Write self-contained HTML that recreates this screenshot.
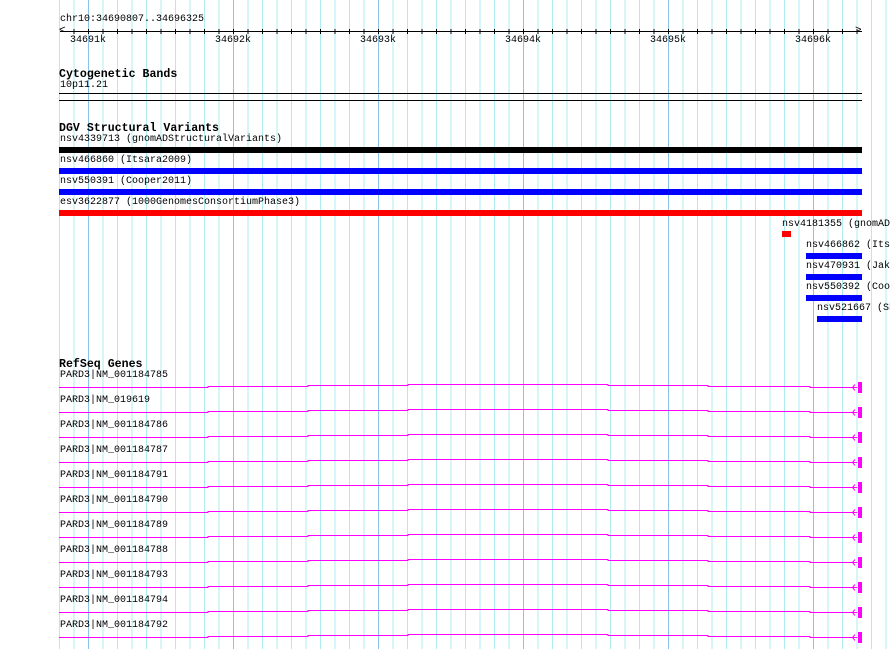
<!DOCTYPE html>
<html><head><meta charset="utf-8"><style>
html,body{margin:0;padding:0;}
body{width:890px;height:649px;overflow:hidden;position:relative;background:#fff;font-family:"Liberation Mono","DejaVu Sans Mono",monospace;font-size:10px;color:#000;}
.grid{position:absolute;left:59px;top:0;width:831px;height:649px;
background-image:repeating-linear-gradient(90deg,#aeecf2 0,#aeecf2 1px,transparent 1px,transparent 14.5px);
background-position:0 0;}
.maj{position:absolute;top:0;width:1px;height:649px;background:#8cc4e8;}
.t{position:absolute;white-space:nowrap;line-height:16px;}
.h{position:absolute;white-space:nowrap;font-weight:bold;font-size:11.6px;line-height:15px;}
.bar{position:absolute;height:6px;}
svg{position:absolute;left:0;top:0;}
</style></head><body>
<div class="grid"></div>
<div class="maj" style="left:88px"></div>
<div class="maj" style="left:233px"></div>
<div class="maj" style="left:378px"></div>
<div class="maj" style="left:523px"></div>
<div class="maj" style="left:668px"></div>
<div class="maj" style="left:813px"></div>

<div class="t" style="left:60px;top:12px">chr10:34690807..34696325</div>
<div style="position:absolute;left:60px;top:31px;width:802px;height:1px;background:#000"></div>
<div style="position:absolute;left:59px;top:29px;width:803px;height:5px;background-image:repeating-linear-gradient(90deg,transparent 0,transparent 13.5px,#000 13.5px,#000 14.5px);background-position:1px 0"></div>
<div class="t" style="left:59px;top:23px;font-size:11px">&lt;</div>
<div class="t" style="left:855px;top:23px;font-size:11px">&gt;</div>
<div class="t" style="left:70px;top:33px">34691k</div>
<div class="t" style="left:215px;top:33px">34692k</div>
<div class="t" style="left:360px;top:33px">34693k</div>
<div class="t" style="left:505px;top:33px">34694k</div>
<div class="t" style="left:650px;top:33px">34695k</div>
<div class="t" style="left:795px;top:33px">34696k</div>

<div class="h" style="left:59px;top:67px">Cytogenetic Bands</div>
<div class="t" style="left:60px;top:78px">10p11.21</div>
<div style="position:absolute;left:59px;top:93px;width:803px;height:1px;background:#000"></div>
<div style="position:absolute;left:59px;top:100px;width:803px;height:1px;background:#000"></div>

<div class="h" style="left:59px;top:121px">DGV Structural Variants</div>
<div class="t" style="left:60px;top:132px">nsv4339713 (gnomADStructuralVariants)</div>
<div class="bar" style="left:59px;top:147px;width:803px;background:#000"></div>
<div class="t" style="left:60px;top:153px">nsv466860 (Itsara2009)</div>
<div class="bar" style="left:59px;top:168px;width:803px;background:#0000ff"></div>
<div class="t" style="left:60px;top:174px">nsv550391 (Cooper2011)</div>
<div class="bar" style="left:59px;top:189px;width:803px;background:#0000ff"></div>
<div class="t" style="left:60px;top:195px">esv3622877 (1000GenomesConsortiumPhase3)</div>
<div class="bar" style="left:59px;top:210px;width:803px;background:#ff0000"></div>
<div class="t" style="left:782px;top:217px">nsv4181355 (gnomADStructuralVariants)</div>
<div class="bar" style="left:782px;top:231px;width:9px;background:#ff0000"></div>
<div class="t" style="left:806px;top:238px">nsv466862 (Itsara2009)</div>
<div class="bar" style="left:806px;top:253px;width:56px;background:#0000ff"></div>
<div class="t" style="left:806px;top:259px">nsv470931 (Jakobsson2008)</div>
<div class="bar" style="left:806px;top:274px;width:56px;background:#0000ff"></div>
<div class="t" style="left:806px;top:280px">nsv550392 (Cooper2011)</div>
<div class="bar" style="left:806px;top:295px;width:56px;background:#0000ff"></div>
<div class="t" style="left:817px;top:301px">nsv521667 (Shaikh2009)</div>
<div class="bar" style="left:817px;top:316px;width:45px;background:#0000ff"></div>

<div class="h" style="left:59px;top:357px">RefSeq Genes</div>
<div class="t" style="left:60px;top:368px">PARD3|NM_001184785</div>
<div class="t" style="left:60px;top:393px">PARD3|NM_019619</div>
<div class="t" style="left:60px;top:418px">PARD3|NM_001184786</div>
<div class="t" style="left:60px;top:443px">PARD3|NM_001184787</div>
<div class="t" style="left:60px;top:468px">PARD3|NM_001184791</div>
<div class="t" style="left:60px;top:493px">PARD3|NM_001184790</div>
<div class="t" style="left:60px;top:518px">PARD3|NM_001184789</div>
<div class="t" style="left:60px;top:543px">PARD3|NM_001184788</div>
<div class="t" style="left:60px;top:568px">PARD3|NM_001184793</div>
<div class="t" style="left:60px;top:593px">PARD3|NM_001184794</div>
<div class="t" style="left:60px;top:618px">PARD3|NM_001184792</div>

<svg width="890" height="649">
<defs>
<g id="g">
<polyline fill="none" stroke="#ff00ff" stroke-width="1" points="59,387.5 208,387.5 208,386.5 308,386.5 308,385.5 408,385.5 408,384.5 508,384.5 508,384.5 608,384.5 608,385.5 708,385.5 708,386.5 810,386.5 810,387.5 857,387.5"/>
<polyline fill="none" stroke="#ff00ff" stroke-width="1" points="855,384.5 852.5,387.5 855,390.5"/>
<rect x="858" y="382" width="4" height="11" fill="#ff00ff"/>
</g>
</defs>
<use href="#g"/>
<use href="#g" y="25"/>
<use href="#g" y="50"/>
<use href="#g" y="75"/>
<use href="#g" y="100"/>
<use href="#g" y="125"/>
<use href="#g" y="150"/>
<use href="#g" y="175"/>
<use href="#g" y="200"/>
<use href="#g" y="225"/>
<use href="#g" y="250"/>
</svg>
</body></html>
